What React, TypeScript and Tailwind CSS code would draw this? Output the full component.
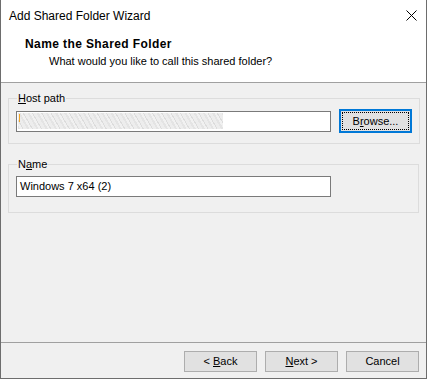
const font = { fontFamily: '"Liberation Sans", Arial, sans-serif' };

const Btn = ({ children, focused }: { children: React.ReactNode; focused?: boolean }) => (
  <div
    className={
      focused
        ? "flex h-[24px] w-[73px] items-center justify-center border-2 border-[#0078d7] bg-[#e1e1e1] p-[1px]"
        : "flex h-[21px] w-[73px] items-center justify-center border border-[#adadad] bg-[#e1e1e1]"
    }
  >
    {focused ? (
      <div className="flex h-full w-full items-center justify-center border border-dotted border-black">
        {children}
      </div>
    ) : (
      children
    )}
  </div>
);

const Group = ({ label, children }: { label: React.ReactNode; children: React.ReactNode }) => (
  <fieldset className="mx-[7px] border border-[#dcdcdc] px-[7px]">
    <legend className="ml-[1px] px-[1px] leading-[16px]">{label}</legend>
    {children}
  </fieldset>
);

export default function App() {
  return (
    <div className="h-[379px] w-[428px] bg-white text-[11px] text-black" style={font}>
      <div className="flex h-[379px] w-[427px] flex-col border-x border-b border-[#6d6d6d] bg-[#f0f0f0]">
        {/* title + header */}
        <div className="h-[83px] border-b border-[#a0a0a0] bg-white">
          <div className="flex h-[31px] items-center justify-between pl-[8px] pr-[9px]">
            <span className="text-[12px]">Add Shared Folder Wizard</span>
            <svg width="11" height="11" viewBox="0 0 11 11" className="mt-[-1px]">
              <path d="M0.5 0.5 L10.5 10.5 M10.5 0.5 L0.5 10.5" stroke="#000" strokeWidth="1" />
            </svg>
          </div>
          <div className="pl-[24px] pt-[5px]">
            <div className="text-[12px] font-bold leading-[16px] tracking-[0.4px]">Name the Shared Folder</div>
            <div className="pl-[24px] pt-[1px] leading-[16px]">What would you like to call this shared folder?</div>
          </div>
        </div>

        {/* body */}
        <div className="flex-1 pt-[7px]">
          <Group
            label={
              <>
                <span className="underline">H</span>ost path
              </>
            }
          >
            <div className="flex items-center gap-[8px] pb-[10px] pt-[3px]">
              <div className="flex h-[21px] w-[315px] items-center border border-[#7a7a7a] bg-white px-[1px]">
                <div className="relative h-[16px] w-[205px] bg-[repeating-linear-gradient(60deg,#e4e4e4_0_2px,#f1f1f1_2px_4px,#dcdcdc_4px_5px,#ededed_5px_8px)]">
                  <div className="absolute left-[1px] top-[1px] h-[8px] w-[1px] bg-[#f5a623]" />
                </div>
              </div>
              <Btn focused>
                <span>
                  B<span className="underline">r</span>owse...
                </span>
              </Btn>
            </div>
          </Group>

          <div className="h-[12px]" />

          <Group
            label={
              <>
                N<span className="underline">a</span>me
              </>
            }
          >
            <div className="pb-[15px] pt-[4px]">
              <div className="flex h-[21px] w-[315px] items-center border border-[#7a7a7a] bg-white px-[3px]">
                Windows 7 x64 (2)
              </div>
            </div>
          </Group>
        </div>

        {/* footer */}
        <div className="h-[36px] border-t border-[#a0a0a0]">
          <div className="flex justify-end gap-[8px] pr-[7px] pt-[8px]">
            <Btn>
              <span>
                &lt; <span className="underline">B</span>ack
              </span>
            </Btn>
            <Btn>
              <span>
                <span className="underline">N</span>ext &gt;
              </span>
            </Btn>
            <Btn>Cancel</Btn>
          </div>
        </div>
      </div>
    </div>
  );
}
